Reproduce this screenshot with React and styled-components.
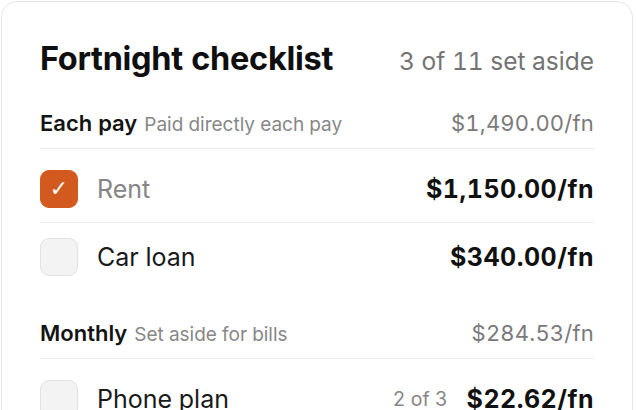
import React from "react";
import styled, { createGlobalStyle } from "styled-components";

const GlobalStyle = createGlobalStyle`
  html, body {
    margin: 0;
    padding: 0;
    background: #ffffff;
  }
  body {
    font-family: Inter, "Noto Sans", sans-serif;
    font-variant-numeric: tabular-nums;
    color: #111111;
    -webkit-font-smoothing: antialiased;
  }
`;

const Card = styled.div`
  box-sizing: border-box;
  width: 632px;
  height: 440px;
  margin: 1px 0 0 1px;
  padding: 37px 38px 40px 38px;
  border: 1px solid #e7e7e7;
  border-radius: 16px;
  background: #ffffff;
`;

const TitleRow = styled.div`
  display: flex;
  align-items: baseline;
  justify-content: space-between;
  height: 40px;
  line-height: 40px;
`;

const Title = styled.h1`
  margin: 0;
  font-size: 32.5px;
  font-weight: 700;
  letter-spacing: -0.3px;
  color: #0f0f0f;
`;

const Progress = styled.span`
  font-size: 24.5px;
  color: #737373;
`;

const SectionHeader = styled.div`
  display: flex;
  align-items: baseline;
  justify-content: space-between;
  line-height: 28px;
  padding: ${({ $top }) => $top}px 0 9px;
  border-bottom: 1px solid #ececec;
`;

const HeaderLeft = styled.div`
  display: flex;
  align-items: baseline;
  gap: 7px;
`;

const HeaderName = styled.span`
  font-size: 22px;
  font-weight: 600;
  color: #141414;
`;

const HeaderHint = styled.span`
  font-size: 19px;
  color: #878787;
`;

const HeaderTotal = styled.span`
  font-size: 22px;
  letter-spacing: 0.2px;
  color: #7a7a7a;
`;

const List = styled.div`
  display: flex;
  flex-direction: column;
  margin-top: 6px;
`;

const Row = styled.div`
  display: flex;
  align-items: center;
  gap: 19px;
  padding: 15px 0 14px;
  border-bottom: ${({ $last }) => ($last ? "none" : "1px solid #ececec")};
`;

const Box = styled.div`
  flex: none;
  box-sizing: border-box;
  width: 38px;
  height: 38px;
  border-radius: 9px;
  display: flex;
  align-items: center;
  justify-content: center;
  background: ${({ $checked }) => ($checked ? "#d35a1e" : "#f3f3f3")};
  border: 1.5px solid ${({ $checked }) => ($checked ? "#d35a1e" : "#e2e2e2")};
  color: #ffffff;
  font-family: "DejaVu Sans", sans-serif;
  font-size: 22px;
  font-weight: 700;
  line-height: 1;
`;

const Label = styled.span`
  flex: 1;
  font-size: 25px;
  color: ${({ $done }) => ($done ? "#858585" : "#1a1a1a")};
`;

const Count = styled.span`
  font-size: 19.5px;
  color: #858585;
`;

const Amount = styled.span`
  font-size: 25px;
  font-weight: 700;
  letter-spacing: 0.5px;
  color: #111111;
`;

const sections = [
  {
    name: "Each pay",
    hint: "Paid directly each pay",
    total: "$1,490.00/fn",
    top: 30,
    items: [
      { label: "Rent", amount: "$1,150.00/fn", done: true },
      { label: "Car loan", amount: "$340.00/fn" },
    ],
  },
  {
    name: "Monthly",
    hint: "Set aside for bills",
    total: "$284.53/fn",
    top: 29,
    items: [{ label: "Phone plan", amount: "$22.62/fn", count: "2 of 3" }],
  },
];

export default function App() {
  return (
    <>
      <GlobalStyle />
      <Card>
        <TitleRow>
          <Title>Fortnight checklist</Title>
          <Progress>3 of 11 set aside</Progress>
        </TitleRow>
        {sections.map((s) => (
          <div key={s.name}>
            <SectionHeader $top={s.top}>
              <HeaderLeft>
                <HeaderName>{s.name}</HeaderName>
                <HeaderHint>{s.hint}</HeaderHint>
              </HeaderLeft>
              <HeaderTotal>{s.total}</HeaderTotal>
            </SectionHeader>
            <List>
              {s.items.map((it, i) => (
                <Row key={it.label} $last={i === s.items.length - 1}>
                  <Box $checked={it.done}>{it.done ? "✓" : null}</Box>
                  <Label $done={it.done}>{it.label}</Label>
                  {it.count && <Count>{it.count}</Count>}
                  <Amount>{it.amount}</Amount>
                </Row>
              ))}
            </List>
          </div>
        ))}
      </Card>
    </>
  );
}
